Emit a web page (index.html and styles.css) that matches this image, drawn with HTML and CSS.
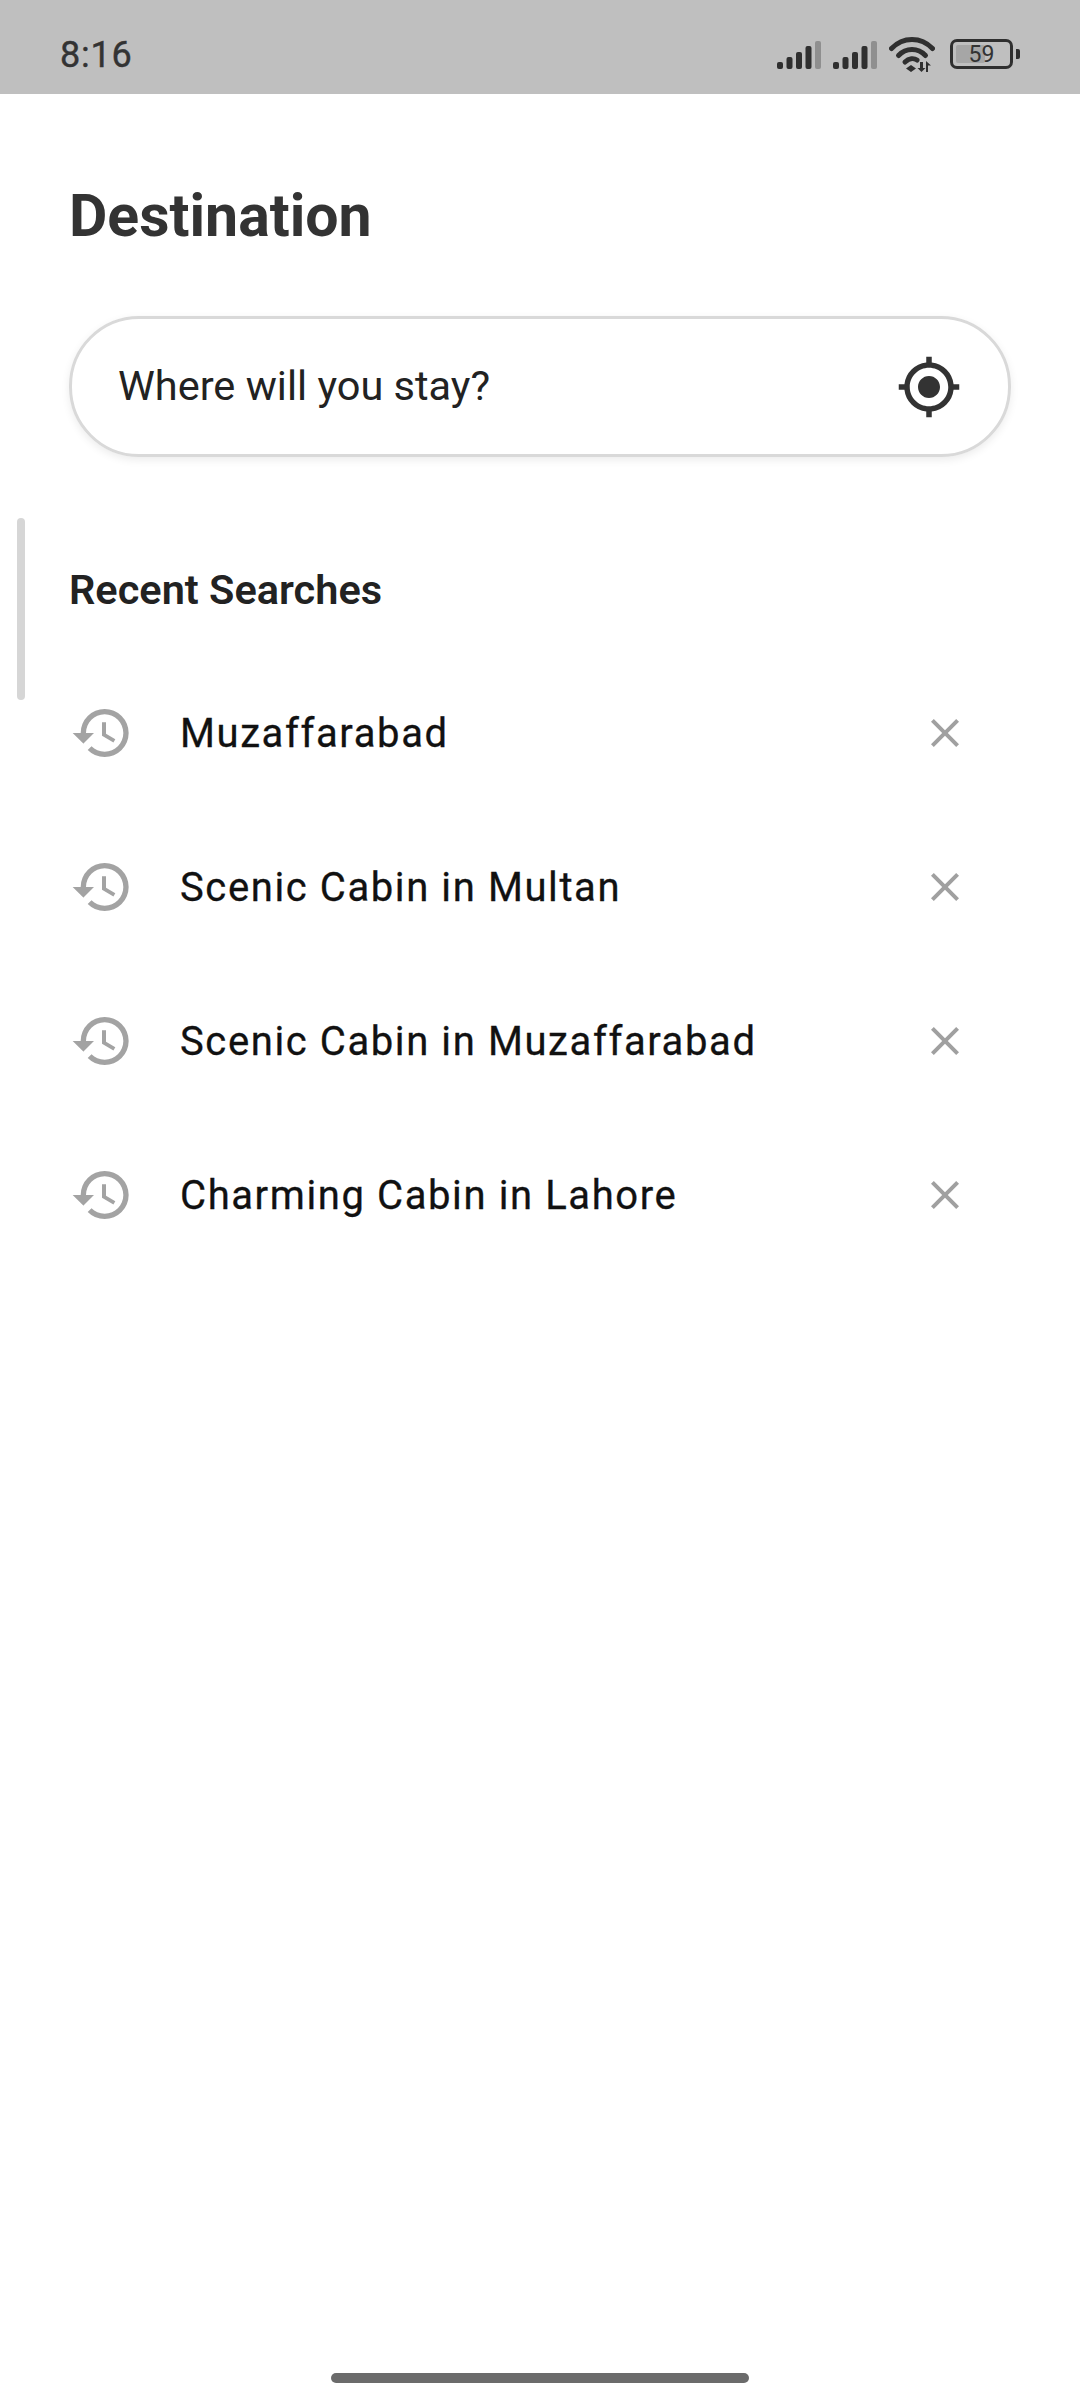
FILE: index.html
```html
<!DOCTYPE html>
<html lang="en">

<head>
  <meta charset="UTF-8">
  <meta name="viewport" content="width=device-width, initial-scale=1.0">
  <link rel="stylesheet" href="styles.css">
  <title>Destination</title>
</head>

<body>
  <div class="status">
    <span class="time">8:16</span>
    <div class="status_icons">
      <svg class="signal" viewBox="0 0 44 28">
        <rect class="bar" x="0" y="21" width="6" height="7" rx="2"/>
        <rect class="bar" x="9.500" y="16" width="6" height="12" rx="2"/>
        <rect class="bar" x="19" y="11" width="6" height="17" rx="2"/>
        <rect class="bar" x="28.500" y="5" width="6" height="23" rx="2"/>
        <rect class="bar_off" x="38" y="0" width="6" height="28" rx="2"/>
      </svg>
      <svg class="signal" viewBox="0 0 44 28">
        <rect class="bar" x="0" y="21" width="6" height="7" rx="2"/>
        <rect class="bar" x="9.500" y="16" width="6" height="12" rx="2"/>
        <rect class="bar" x="19" y="11" width="6" height="17" rx="2"/>
        <rect class="bar" x="28.500" y="5" width="6" height="23" rx="2"/>
        <rect class="bar_off" x="38" y="0" width="6" height="28" rx="2"/>
      </svg>
      <svg class="wifi" viewBox="0 0 46 35">
        <path class="wave" d="M2.500 11.500C14 -0.500 32 -0.500 43.500 11.500"/>
        <path class="wave" d="M9.500 18.500C17 10.500 29 10.500 36.500 18.500"/>
        <path class="wave" d="M16 25C20 21 25 21 28 23"/>
        <path class="bar" d="M22 35l-5-3.500 5-3.500 5 3.500zM31 25h3v6h2.500l-4 4-4-4H31zM37 24l5 4.500h-3V35h-2z"/>
      </svg>
      <div class="battery">
        <div class="battery_body">
          <div class="battery_fill"></div>
          <span class="battery_text">59</span>
        </div>
        <div class="battery_nub"></div>
      </div>
    </div>
  </div>

  <div class="page">
    <h1 class="title">Destination</h1>

    <div class="search">
      <span class="search_text">Where will you stay?</span>
      <svg class="locate" viewBox="0 0 24 24">
        <path d="M12 8c-2.210 0-4 1.790-4 4s1.790 4 4 4 4-1.790 4-4-1.790-4-4-4zm8.940 3A8.994 8.994 0 0 0 13 3.060V1h-2v2.060A8.994 8.994 0 0 0 3.060 11H1v2h2.060A8.994 8.994 0 0 0 11 20.940V23h2v-2.060A8.994 8.994 0 0 0 20.940 13H23v-2h-2.060zM12 19c-3.870 0-7-3.130-7-7s3.130-7 7-7 7 3.130 7 7-3.130 7-7 7z"/>
      </svg>
    </div>

    <div class="scrollbar"></div>

    <h2 class="recent_title">Recent Searches</h2>

    <ul class="recent">
      <li class="recent_item">
        <svg class="history" viewBox="0 0 24 24"><path d="M13 3a9 9 0 0 0-9 9H1l3.890 3.890.070.140L9 12H6c0-3.870 3.130-7 7-7s7 3.130 7 7-3.130 7-7 7c-1.930 0-3.680-.790-4.940-2.060l-1.420 1.420A8.954 8.954 0 0 0 13 21a9 9 0 0 0 0-18zm-1 5v5l4.280 2.540.720-1.210-3.500-2.080V8H12z"/></svg>
        <span class="recent_text">Muzaffarabad</span>
        <svg class="close" viewBox="0 0 24 24"><path d="M19 6.410 17.590 5 12 10.590 6.410 5 5 6.410 10.590 12 5 17.590 6.410 19 12 13.410 17.590 19 19 17.590 13.410 12z"/></svg>
      </li>
      <li class="recent_item">
        <svg class="history" viewBox="0 0 24 24"><path d="M13 3a9 9 0 0 0-9 9H1l3.890 3.890.070.140L9 12H6c0-3.870 3.130-7 7-7s7 3.130 7 7-3.130 7-7 7c-1.930 0-3.680-.790-4.940-2.060l-1.420 1.420A8.954 8.954 0 0 0 13 21a9 9 0 0 0 0-18zm-1 5v5l4.280 2.540.720-1.210-3.500-2.080V8H12z"/></svg>
        <span class="recent_text">Scenic Cabin in Multan</span>
        <svg class="close" viewBox="0 0 24 24"><path d="M19 6.410 17.590 5 12 10.590 6.410 5 5 6.410 10.590 12 5 17.590 6.410 19 12 13.410 17.590 19 19 17.590 13.410 12z"/></svg>
      </li>
      <li class="recent_item">
        <svg class="history" viewBox="0 0 24 24"><path d="M13 3a9 9 0 0 0-9 9H1l3.890 3.890.070.140L9 12H6c0-3.870 3.130-7 7-7s7 3.130 7 7-3.130 7-7 7c-1.930 0-3.680-.790-4.940-2.060l-1.420 1.420A8.954 8.954 0 0 0 13 21a9 9 0 0 0 0-18zm-1 5v5l4.280 2.540.720-1.210-3.500-2.080V8H12z"/></svg>
        <span class="recent_text">Scenic Cabin in Muzaffarabad</span>
        <svg class="close" viewBox="0 0 24 24"><path d="M19 6.410 17.590 5 12 10.590 6.410 5 5 6.410 10.590 12 5 17.590 6.410 19 12 13.410 17.590 19 19 17.590 13.410 12z"/></svg>
      </li>
      <li class="recent_item">
        <svg class="history" viewBox="0 0 24 24"><path d="M13 3a9 9 0 0 0-9 9H1l3.890 3.890.070.140L9 12H6c0-3.870 3.130-7 7-7s7 3.130 7 7-3.130 7-7 7c-1.930 0-3.680-.790-4.940-2.060l-1.420 1.420A8.954 8.954 0 0 0 13 21a9 9 0 0 0 0-18zm-1 5v5l4.280 2.540.720-1.210-3.500-2.080V8H12z"/></svg>
        <span class="recent_text">Charming Cabin in Lahore</span>
        <svg class="close" viewBox="0 0 24 24"><path d="M19 6.410 17.590 5 12 10.590 6.410 5 5 6.410 10.590 12 5 17.590 6.410 19 12 13.410 17.590 19 19 17.590 13.410 12z"/></svg>
      </li>
    </ul>
  </div>

  <div class="home_row">
    <div class="home_bar"></div>
  </div>
</body>

</html>
```

FILE: styles.css
```css
html,
body {
  margin: 0;
  padding: 0;
}

body {
  display: flex;
  flex-direction: column;
  width: 1080px;
  height: 2400px;
  overflow: hidden;
  background-color: #fff;
  font-family: Roboto, "Liberation Sans", sans-serif;
}

/* status bar */
.status {
  display: flex;
  align-items: center;
  justify-content: space-between;
  height: 94px;
  padding: 0 60px 0 60px;
  background-color: #bfbfbf;
}

.time {
  margin-top: 15px;
  font-size: 36px;
  font-weight: 400;
  color: #333;
  letter-spacing: 0.8px;
  -webkit-text-stroke: 0.4px #333;
}

.status_icons {
  display: flex;
  align-items: center;
  gap: 12px;
  margin-top: 14px;
}

.signal {
  width: 44px;
  height: 28px;
  margin-top: 2px;
}

.bar {
  fill: #2f2f2f;
}

.bar_off {
  fill: #8f8f8f;
}

.wifi {
  width: 46px;
  height: 35px;
  margin-right: 3px;
}

.wave {
  fill: none;
  stroke: #2f2f2f;
  stroke-width: 5;
  stroke-linecap: round;
}

.battery {
  display: flex;
  align-items: center;
  gap: 3px;
}

.battery_body {
  position: relative;
  display: flex;
  align-items: center;
  justify-content: center;
  box-sizing: border-box;
  width: 63px;
  height: 30px;
  border: 3px solid #2f2f2f;
  border-radius: 7px;
}

.battery_fill {
  position: absolute;
  left: 3px;
  top: 3px;
  bottom: 3px;
  width: 29px;
  background-color: #a6a6a6;
  border-radius: 2px;
}

.battery_text {
  position: relative;
  font-size: 23px;
  color: #333;
  line-height: 1;
}

.battery_nub {
  width: 4px;
  height: 10px;
  background-color: #2f2f2f;
  border-radius: 0 2px 2px 0;
}

/* page content */
.page {
  position: relative;
  flex: 1;
  padding: 0 70px;
}

.title {
  margin: 89px 0 0 -1px;
  font-size: 59px;
  line-height: 66px;
  font-weight: 700;
  color: #333;
}

.search {
  display: flex;
  align-items: center;
  justify-content: space-between;
  box-sizing: border-box;
  width: 942px;
  height: 141px;
  margin: 67px 0 0 -1px;
  padding: 0 46px 0 46px;
  border: 3px solid #d9d9d9;
  border-radius: 70px;
  box-shadow: 0 3px 8px rgba(0, 0, 0, 0.08);
}

.search_text {
  margin-top: -2px;
  font-size: 41.5px;
  color: #222;
}

.locate {
  width: 66px;
  height: 66px;
  fill: #333;
}

/* sits on the left edge, over the list */
.scrollbar {
  position: absolute;
  left: 17px;
  top: 424px;
  width: 8px;
  height: 182px;
  background-color: #d6d6d6;
  border-radius: 4px;
}

.recent_title {
  margin: 111px 0 0 -1px;
  font-size: 41.5px;
  line-height: 44px;
  font-weight: 600;
  color: #222;
}

.recent {
  margin: 44px 0 0 0;
  padding: 0;
  list-style-type: none;
}

.recent_item {
  display: flex;
  align-items: center;
  height: 154px;
}

.history {
  flex-shrink: 0;
  width: 64px;
  height: 64px;
  fill: #a3a3a3;
}

.recent_text {
  flex: 1;
  margin-left: 46px;
  font-size: 40px;
  letter-spacing: 1.6px;
  color: #111;
  -webkit-text-stroke: 0.3px #111;
}

.close {
  flex-shrink: 0;
  width: 48px;
  height: 48px;
  margin-right: 41px;
  fill: #a0a0a0;
}

/* gesture pill */
.home_row {
  display: flex;
  justify-content: center;
  padding-bottom: 17px;
}

.home_bar {
  width: 418px;
  height: 10px;
  background-color: #6b6b6b;
  border-radius: 5px;
}
```
